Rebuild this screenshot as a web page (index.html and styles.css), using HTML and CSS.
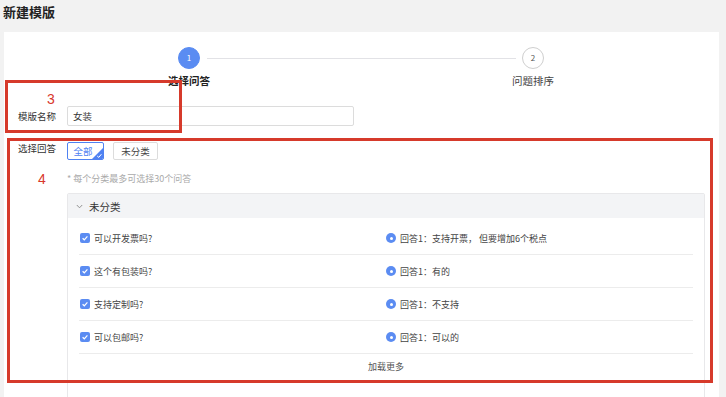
FILE: index.html
```html
<!DOCTYPE html>
<html lang="zh-CN">
<head>
<meta charset="utf-8">
<title>新建模版</title>
<link rel="stylesheet" href="styles.css">
</head>
<body>
<div class="page">
  <h1 class="page-title">新建模版</h1>
  <div class="card">
    <div class="steps">
      <div class="step active">
        <div class="step-dot">1</div>
        <div class="step-label">选择问答</div>
      </div>
      <div class="step-line"></div>
      <div class="step">
        <div class="step-dot">2</div>
        <div class="step-label">问题排序</div>
      </div>
    </div>

    <div class="form-item name-item">
      <div class="form-label">模版名称</div>
      <div class="input">女装</div>
    </div>

    <div class="form-item select-item">
      <div class="form-label">选择回答</div>
      <div class="form-control">
        <div class="tabs">
          <div class="tab active">全部
            <svg class="tab-corner" width="11" height="11" viewBox="0 0 11 11"><polygon points="11,0 11,11 0,11" fill="#4f82f2"/><polyline points="5.2,8 6.8,9.4 9.4,6.2" fill="none" stroke="#fff" stroke-width="1"/></svg>
          </div>
          <div class="tab">未分类</div>
        </div>
        <div class="hint">* 每个分类最多可选择30个问答</div>
        <div class="panel">
          <div class="panel-header">
            <svg class="chevron" width="7" height="5" viewBox="0 0 7 5"><polyline points="0.8,1 3.5,3.8 6.2,1" fill="none" stroke="#888" stroke-width="0.9"/></svg>
            <span>未分类</span>
          </div>
          <div class="panel-body">
            <div class="row">
              <div class="question"><span class="checkbox"><svg width="10" height="10" viewBox="0 0 10 10"><polyline points="2.6,5.2 4.3,6.8 7.4,3.3" fill="none" stroke="#fff" stroke-width="1.2"/></svg></span>可以开发票吗?</div>
              <div class="answer"><span class="radio"></span>回答1：支持开票， 但要增加6个税点</div>
            </div>
            <div class="row">
              <div class="question"><span class="checkbox"><svg width="10" height="10" viewBox="0 0 10 10"><polyline points="2.6,5.2 4.3,6.8 7.4,3.3" fill="none" stroke="#fff" stroke-width="1.2"/></svg></span>这个有包装吗?</div>
              <div class="answer"><span class="radio"></span>回答1：有的</div>
            </div>
            <div class="row">
              <div class="question"><span class="checkbox"><svg width="10" height="10" viewBox="0 0 10 10"><polyline points="2.6,5.2 4.3,6.8 7.4,3.3" fill="none" stroke="#fff" stroke-width="1.2"/></svg></span>支持定制吗?</div>
              <div class="answer"><span class="radio"></span>回答1：不支持</div>
            </div>
            <div class="row">
              <div class="question"><span class="checkbox"><svg width="10" height="10" viewBox="0 0 10 10"><polyline points="2.6,5.2 4.3,6.8 7.4,3.3" fill="none" stroke="#fff" stroke-width="1.2"/></svg></span>可以包邮吗?</div>
              <div class="answer"><span class="radio"></span>回答1：可以的</div>
            </div>
            <div class="load-more">加载更多</div>
          </div>
        </div>
      </div>
    </div>
  </div>

  <div class="mark mark-3"><span class="mark-num">3</span></div>
  <div class="mark mark-4"><span class="mark-num">4</span></div>
</div>
</body>
</html>
```

FILE: styles.css
```css
* { box-sizing: border-box; }
html, body { margin: 0; padding: 0; }
body {
  background: #f2f2f2;
  font-family: "Noto Sans CJK SC", "Noto Sans", sans-serif;
  color: #333;
  overflow: hidden;
}
.page {
  position: relative;
  width: 726px;
  height: 397px;
  overflow: hidden;
}
.page-title {
  margin: 0;
  padding: 3px 0 0 3px;
  height: 32px;
  font-size: 13px;
  line-height: 18px;
  font-weight: 700;
  color: #222;
}
.card {
  margin-left: 4px;
  width: 715px;
  height: 365px;
  background: #fff;
  padding: 15px 14px 0 14px;
  overflow: hidden;
}
.steps {
  display: flex;
  margin-left: 141px;
  width: 404px;
}
.step {
  width: 60px;
  display: flex;
  flex-direction: column;
  align-items: center;
}
.step-dot {
  width: 22px;
  height: 22px;
  border-radius: 50%;
  border: 1px solid #cfcfcf;
  color: #555;
  font-size: 8px;
  line-height: 20px;
  text-align: center;
  background: #fff;
}
.step.active .step-dot {
  background: #5a8cf2;
  border-color: #5a8cf2;
  color: #fff;
}
.step-label {
  margin-top: 5px;
  font-size: 10.5px;
  line-height: 14px;
  white-space: nowrap;
  color: #444;
}
.step.active .step-label {
  font-weight: 700;
  color: #222;
}
.step-line {
  flex: 1;
  height: 1px;
  background: #e2e2e6;
  margin: 11px -13px 0 -12px;
}
.form-item {
  display: flex;
}
.form-label {
  width: 49px;
  font-size: 9.5px;
  color: #333;
  flex-shrink: 0;
}
.name-item {
  margin-top: 18px;
  align-items: center;
}
.input {
  width: 287px;
  height: 20px;
  border: 1px solid #dcdcdc;
  border-radius: 2px;
  padding-left: 5px;
  font-size: 9.5px;
  line-height: 18px;
  color: #333;
}
.select-item {
  margin-top: 16px;
  align-items: flex-start;
}
.select-item .form-label {
  line-height: 14px;
  margin-top: -1px;
}
.form-control {
  flex: 1;
}
.tabs {
  display: flex;
  gap: 9px;
}
.tab {
  position: relative;
  height: 18px;
  width: 45px;
  text-align: center;
  border: 1px solid #dcdcdc;
  border-radius: 2px;
  font-size: 9.5px;
  line-height: 16px;
  color: #444;
  overflow: hidden;
}
.tab.active {
  width: 37px;
  padding-right: 5px;
  border-color: #4f82f2;
  color: #4f82f2;
}
.tab-corner {
  position: absolute;
  right: 0;
  bottom: 0;
}
.hint {
  margin-top: 13px;
  font-size: 9px;
  line-height: 12px;
  color: #aaa;
}
.panel {
  margin-top: 8px;
  border: 1px solid #e8e8ea;
  border-radius: 2px;
  height: 240px;
}
.panel-header {
  height: 24px;
  background: #f3f4f6;
  display: flex;
  align-items: center;
  padding-left: 8px;
  font-size: 10.5px;
  color: #333;
}
.chevron {
  margin-right: 6px;
}
.panel-body {
  padding: 4px 11px 0 11px;
}
.row {
  display: flex;
  align-items: center;
  height: 33px;
  border-bottom: 1px solid #ececec;
  font-size: 9px;
  color: #444;
}
.question {
  width: 307px;
  display: flex;
  align-items: center;
  padding-left: 1px;
}
.answer {
  display: flex;
  align-items: center;
}
.checkbox {
  width: 10px;
  height: 10px;
  border-radius: 2px;
  background: #5b8cf2;
  margin-right: 4px;
  display: flex;
}
.radio {
  width: 10px;
  height: 10px;
  border-radius: 50%;
  background: #5b8cf2;
  margin-right: 4px;
  position: relative;
}
.radio::after {
  content: "";
  position: absolute;
  left: 3.5px;
  top: 3.5px;
  width: 3px;
  height: 3px;
  border-radius: 50%;
  background: #fff;
}
.load-more {
  text-align: center;
  font-size: 9px;
  color: #555;
  line-height: 12px;
  padding-top: 7px;
}
.mark {
  position: absolute;
  border: 3px solid #d63a2b;
}
.mark-3 {
  left: 5px;
  top: 80px;
  width: 177px;
  height: 53px;
}
.mark-4 {
  left: 7px;
  top: 138px;
  width: 706px;
  height: 245px;
}
.mark-num {
  position: absolute;
  color: #d8382c;
  font-family: "Liberation Sans", Arial, sans-serif;
  font-size: 14px;
  line-height: 14px;
}
.mark-3 .mark-num {
  left: 39px;
  top: 9px;
}
.mark-4 .mark-num {
  left: 28px;
  top: 31px;
}
```
